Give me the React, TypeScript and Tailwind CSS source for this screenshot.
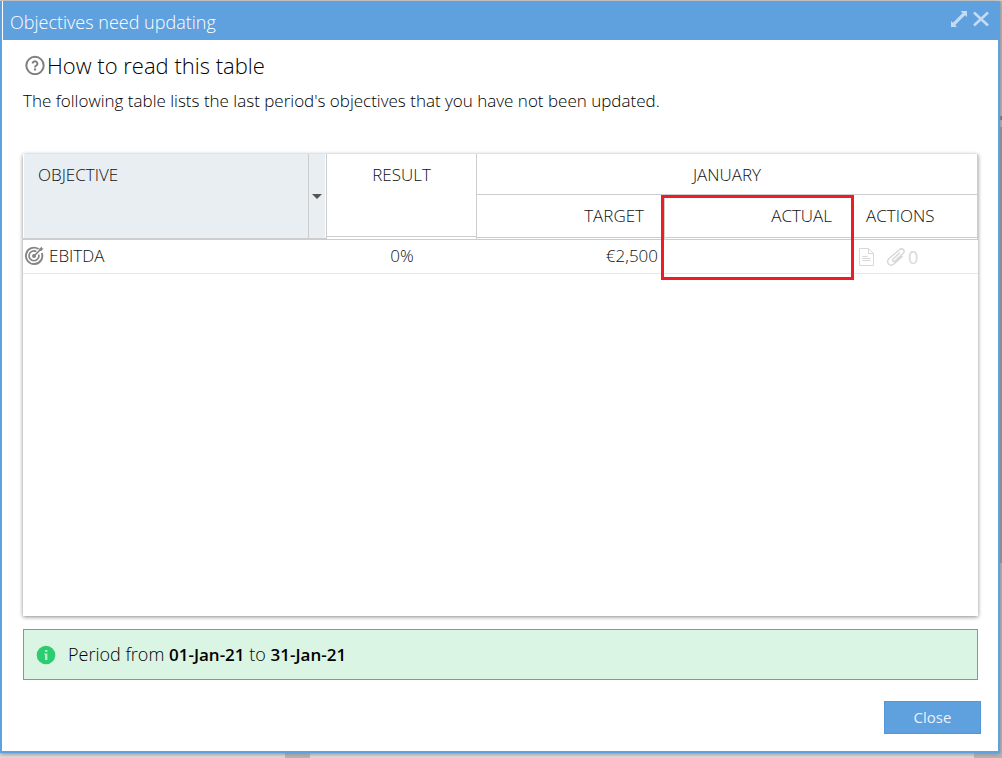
import { useState } from 'react'

interface Objective {
  name: string
  result: string
  target: string
  actual: string
  attachments: number
}

const objectives: Objective[] = [
  { name: 'EBITDA', result: '0%', target: '€2,500', actual: '', attachments: 0 },
]

function TargetIcon() {
  return (
    <svg viewBox="0 0 20 20" className="size-5 shrink-0" fill="none" stroke="#858585" aria-hidden="true">
      <path d="M14.6 3A8.200 8.200 0 1 0 17.800 7" strokeWidth="1.900" />
      <path d="M12.400 5.600A4.900 4.900 0 1 0 14.700 8.600" strokeWidth="1.700" />
      <circle cx="10" cy="10" r="2" fill="#858585" stroke="none" />
      <path d="M10 10 17 3" strokeWidth="1.600" />
      <path d="M15 5 15.200 2.800 17.800.6 18 2.200 19.600 2.400 17.200 5Z" fill="#858585" stroke="none" />
    </svg>
  )
}

function HelpIcon() {
  return (
    <svg viewBox="0 0 20 20" className="size-5 shrink-0" fill="none" stroke="#808080" aria-hidden="true">
      <circle cx="10" cy="10.500" r="8.700" strokeWidth="2" />
      <path d="M7.600 8.600a2.400 2.300 0 1 1 3.700 1.900c-.9.6-1.300.9-1.300 1.900" strokeWidth="2" />
      <path d="M10 13.500v2" strokeWidth="2.200" />
    </svg>
  )
}

function ExpandIcon() {
  return (
    <svg viewBox="0 0 16 16" className="size-4" fill="currentColor" aria-hidden="true">
      <path d="M9.500 0H16v6l-2-1.800L4.200 14 6 16H0v-6l2 1.800L11.600 2Z" />
    </svg>
  )
}

function CloseIcon() {
  return (
    <svg viewBox="0 0 16 16" className="size-4" fill="none" stroke="currentColor" strokeWidth="2.600" aria-hidden="true">
      <path d="M1 1.500l14 13M15 1.500l-14 13" />
    </svg>
  )
}

function NoteIcon() {
  return (
    <svg viewBox="0 0 15 18" className="w-[15px] h-[18px]" fill="none" stroke="currentColor" aria-hidden="true">
      <path d="M.5.5h9l5 5v12H.5ZM9.500.5v5h5M3.500 8.500h5M3.500 10.500h8M3.500 12.500h8" />
    </svg>
  )
}

function ClipIcon() {
  return (
    <svg viewBox="0 0 20 18" className="w-5 h-[18px]" fill="none" stroke="currentColor" strokeWidth="1.500" strokeLinecap="round" aria-hidden="true">
      <path d="M13.500 5 7 11.200c-1.400 1.400.5 3.200 1.900 1.900l8.200-7.600c3-3-1-6.200-4-3.500L3 10.500C-1 14.500 4.200 19.500 8.200 15.700L16 8.600" />
    </svg>
  )
}

function InfoIcon() {
  return (
    <svg viewBox="0 0 20 20" className="size-5 shrink-0" aria-hidden="true">
      <circle cx="10" cy="10" r="9.300" fill="#2ecc71" />
      <path d="M9 5h2.400v2H9ZM8.400 8.500h3V15H9V10h-.600Z" fill="#b5edcb" />
    </svg>
  )
}

export default function App() {
  const [open, setOpen] = useState(true)
  const [maximized, setMaximized] = useState(false)

  return (
    <div className="flex min-h-screen flex-col bg-[#d2d2d2] pt-px font-['Open_Sans',sans-serif] text-black">
      <div className="flex flex-1">
        {open && (
          <section
            role="dialog"
            aria-labelledby="dialog-title"
            className="z-10 flex flex-1 flex-col border-2 border-t-0 border-[#5fa0de] bg-white shadow-[0_1px_4px_#888]"
          >
            <header className="ml-px flex h-[39px] items-center justify-between bg-[#5fa0de] pr-[9px] pl-[7px]">
              <h1 id="dialog-title" className="pt-0.5 text-lg font-light text-white">Objectives need updating</h1>
              <div className="flex gap-1.5 pb-1 text-[#c3dcf4]">
                <button type="button" aria-label="Maximize" onClick={() => setMaximized(!maximized)}>
                  <ExpandIcon />
                </button>
                <button type="button" aria-label="Close dialog" onClick={() => setOpen(false)}>
                  <CloseIcon />
                </button>
              </div>
            </header>

            <div className="flex flex-1 flex-col pt-3 pr-5 pl-[21px]">
              <h2 className="flex items-center gap-0.5 pl-0.5 text-[22px] leading-[26px] font-light">
                <HelpIcon />
                How to read this table
              </h2>
              <p className="mt-[11px] text-[17px] leading-6 font-light">
                The following table lists the last period's objectives that you have not been updated.
              </p>

              <div className="mt-[41px] flex-1 bg-white shadow-[0_1px_4px_#888]">
                <table className="w-full table-fixed border-separate border-spacing-0 text-[17px] leading-6 font-light text-[#111]">
                  <colgroup>
                    <col className="w-[304px]" />
                    <col className="w-[150px]" />
                    <col className="w-[187px]" />
                    <col className="w-[190px]" />
                    <col />
                  </colgroup>
                  <thead className="align-top">
                    <tr className="h-[41px]">
                      <th rowSpan={2} className="border-r border-b-2 border-[#cdcdcd] p-0 px-px font-light">
                        <div className="flex h-[84px] bg-[#e9eef2]">
                          <span className="flex-1 pt-[9px] pl-3.5 text-left">OBJECTIVE</span>
                          <button
                            type="button"
                            aria-label="Objective column menu"
                            className="flex w-[17px] items-center justify-center border-l border-[#cdcdcd]"
                          >
                            <svg viewBox="0 0 10 5" className="h-[5px] w-2.5" fill="#555" aria-hidden="true">
                              <path d="M0 0h10L5 5Z" />
                            </svg>
                          </button>
                        </div>
                      </th>
                      <th rowSpan={2} className="border-r border-b border-[#cdcdcd] p-0 font-light">
                        <div className="h-[83px] border-b border-[#cdcdcd] pt-[9px]">RESULT</div>
                      </th>
                      <th colSpan={3} className="border-r border-b border-[#cdcdcd] p-0 pt-[9px] font-light">JANUARY</th>
                    </tr>
                    <tr className="h-[45px]">
                      <th className="border-b border-[#cdcdcd] p-0 font-light">
                        <div className="h-[43px] border-b border-[#cdcdcd] pt-[9px] pr-5 text-right">TARGET</div>
                      </th>
                      <th className="relative border-b border-l border-[#cdcdcd] p-0 font-light">
                        <div className="h-[43px] border-b border-[#cdcdcd] pt-[9px] pr-[22px] text-right">ACTUAL</div>
                        {/* highlight spans the header and the first row */}
                        <div className="pointer-events-none absolute top-0 -left-1 h-[85px] w-[193px] border-3 border-[#ee1c25]" />
                      </th>
                      <th className="border-r border-b border-[#cdcdcd] p-0 font-light">
                        <div className="h-[43px] border-b border-[#cdcdcd] pt-[9px] pl-3 text-left">ACTIONS</div>
                      </th>
                    </tr>
                  </thead>
                  <tbody>
                    {objectives.map((o) => (
                      <tr key={o.name} className="h-[34px] align-top">
                        <td className="border-b border-[#e8e8e8] p-0 pt-1">
                          <span className="flex items-center gap-[5px] pl-px">
                            <TargetIcon />
                            {o.name}
                          </span>
                        </td>
                        <td className="border-b border-[#e8e8e8] p-0 pt-1 text-center">{o.result}</td>
                        <td className="border-b border-[#e8e8e8] p-0 pt-1 pr-1.5 text-right">{o.target}</td>
                        <td className="border-b border-[#e8e8e8] p-0 pt-1 text-right">{o.actual}</td>
                        <td className="border-b border-[#e8e8e8] p-0 pt-[5px] pl-[5px] text-[#d8d8d8]">
                          <span className="flex items-center">
                            <button type="button" aria-label="Notes">
                              <NoteIcon />
                            </button>
                            <button type="button" aria-label="Attachments" className="ml-3 flex items-center gap-0.5 text-lg leading-6 font-normal">
                              <ClipIcon />
                              {o.attachments}
                            </button>
                          </span>
                        </td>
                      </tr>
                    ))}
                  </tbody>
                </table>
              </div>

              <div className="mt-[13px] flex h-[51px] items-center gap-3 border border-[#2ecc71] bg-[#dbf5e4] pl-3 text-lg font-light">
                <InfoIcon />
                <p>
                  Period from <strong className="text-[17px] font-semibold">01-Jan-21</strong> to{' '}
                  <strong className="text-[17px] font-semibold">31-Jan-21</strong>
                </p>
              </div>
            </div>

            <footer className="flex justify-end pt-[21px] pr-[17px] pb-[17px]">
              <button
                type="button"
                onClick={() => setOpen(false)}
                className="h-[33px] w-[97px] border border-[#5596d6] bg-[#5fa0de] pb-0.5 text-[15px] leading-6 text-[#eaf3fb]"
              >
                Close
              </button>
            </footer>
          </section>
        )}
        {/* edge of the page behind the dialog */}
        {!maximized && (
          <div className="ml-auto flex w-0.5 flex-col bg-[#b4b4b4] pt-[115px]">
            <div className="h-1 bg-[#777]" />
            <div className="mt-[7px] h-[436px] bg-[#919191]" />
          </div>
        )}
      </div>
      {!maximized && (
        <div className="flex h-[5px] bg-[#dcdcdc]">
          <div className="ml-[285px] w-[25px] bg-[#b4b4b4]" />
          <div className="ml-auto w-7 bg-[#b4b4b4]" />
        </div>
      )}
    </div>
  )
}
